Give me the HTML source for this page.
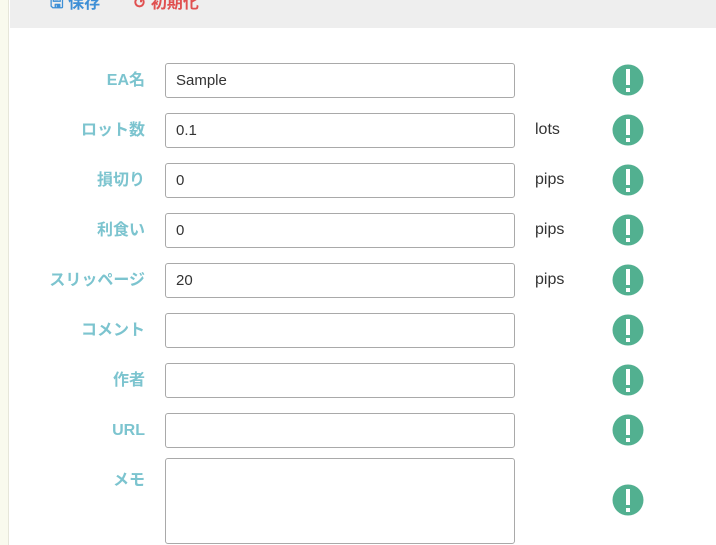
<!DOCTYPE html>
<html><head><meta charset="utf-8"><style>
*{margin:0;padding:0;box-sizing:border-box}
body{width:716px;height:545px;overflow:hidden;background:#fff;position:relative;font-family:"Liberation Sans","Noto Sans CJK JP",sans-serif}
.side{position:absolute;left:0;top:0;width:9px;height:545px;background:#f9faee;border-right:1px solid #e6e6da}
.bar{position:absolute;left:10px;top:0;width:706px;height:28px;background:#eeeeee}
.btn{position:absolute;top:-6px;font-size:16px;font-weight:bold;line-height:20px}
.lbl{position:absolute;right:571px;height:35px;line-height:35px;font-size:16px;font-weight:bold;color:#7cc4cf;white-space:nowrap}
.in{position:absolute;left:165px;width:350px;height:35px;border:1px solid #a9a9a9;border-radius:3px;font-size:15px;color:#333;padding:0 10px;line-height:33px}
.unit{position:absolute;left:535px;height:35px;line-height:35px;font-size:16px;color:#333}
svg.ic{position:absolute;left:612px}
</style></head><body>
<div class="side"></div>
<div class="bar">
<span class="btn" style="left:40px;color:#3d8fd6">🖫 保存</span>
<span class="btn" style="left:123px;color:#e05050">↺ 初期化</span>
</div>
<div class="lbl" style="top:63px">EA名</div><div class="in" style="top:63px">Sample</div>
<div class="lbl" style="top:113px">ロット数</div><div class="in" style="top:113px">0.1</div><div class="unit" style="top:112px">lots</div>
<div class="lbl" style="top:163px">損切り</div><div class="in" style="top:163px">0</div><div class="unit" style="top:162px">pips</div>
<div class="lbl" style="top:213px">利食い</div><div class="in" style="top:213px">0</div><div class="unit" style="top:212px">pips</div>
<div class="lbl" style="top:263px">スリッページ</div><div class="in" style="top:263px">20</div><div class="unit" style="top:262px">pips</div>
<div class="lbl" style="top:313px">コメント</div><div class="in" style="top:313px"></div>
<div class="lbl" style="top:363px">作者</div><div class="in" style="top:363px"></div>
<div class="lbl" style="top:413px">URL</div><div class="in" style="top:413px"></div>
<div class="lbl" style="top:463px">メモ</div><div class="in" style="top:458px;height:86px"></div>
<svg class="ic" style="top:64px" width="32" height="32"><circle cx="16" cy="16" r="15.5" fill="#52b090"/><rect x="14" y="5" width="4" height="16" fill="#fff"/><rect x="14" y="24" width="4" height="4" fill="#fff"/></svg>
<svg class="ic" style="top:114px" width="32" height="32"><circle cx="16" cy="16" r="15.5" fill="#52b090"/><rect x="14" y="5" width="4" height="16" fill="#fff"/><rect x="14" y="24" width="4" height="4" fill="#fff"/></svg>
<svg class="ic" style="top:164px" width="32" height="32"><circle cx="16" cy="16" r="15.5" fill="#52b090"/><rect x="14" y="5" width="4" height="16" fill="#fff"/><rect x="14" y="24" width="4" height="4" fill="#fff"/></svg>
<svg class="ic" style="top:214px" width="32" height="32"><circle cx="16" cy="16" r="15.5" fill="#52b090"/><rect x="14" y="5" width="4" height="16" fill="#fff"/><rect x="14" y="24" width="4" height="4" fill="#fff"/></svg>
<svg class="ic" style="top:264px" width="32" height="32"><circle cx="16" cy="16" r="15.5" fill="#52b090"/><rect x="14" y="5" width="4" height="16" fill="#fff"/><rect x="14" y="24" width="4" height="4" fill="#fff"/></svg>
<svg class="ic" style="top:314px" width="32" height="32"><circle cx="16" cy="16" r="15.5" fill="#52b090"/><rect x="14" y="5" width="4" height="16" fill="#fff"/><rect x="14" y="24" width="4" height="4" fill="#fff"/></svg>
<svg class="ic" style="top:364px" width="32" height="32"><circle cx="16" cy="16" r="15.5" fill="#52b090"/><rect x="14" y="5" width="4" height="16" fill="#fff"/><rect x="14" y="24" width="4" height="4" fill="#fff"/></svg>
<svg class="ic" style="top:414px" width="32" height="32"><circle cx="16" cy="16" r="15.5" fill="#52b090"/><rect x="14" y="5" width="4" height="16" fill="#fff"/><rect x="14" y="24" width="4" height="4" fill="#fff"/></svg>
<svg class="ic" style="top:484px" width="32" height="32"><circle cx="16" cy="16" r="15.5" fill="#52b090"/><rect x="14" y="5" width="4" height="16" fill="#fff"/><rect x="14" y="24" width="4" height="4" fill="#fff"/></svg>
</body></html>
